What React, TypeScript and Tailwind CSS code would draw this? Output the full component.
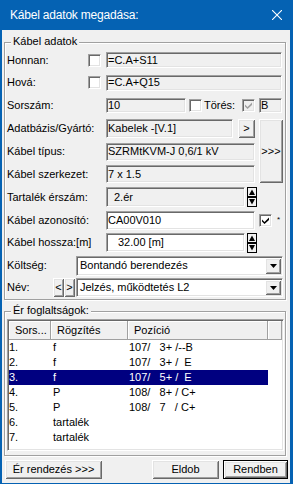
import React from "react";

const FONT = "font-['Liberation_Sans',Arial,sans-serif]";

// classic 3D edges
const sunken =
  "border border-t-[#a0a0a0] border-l-[#a0a0a0] border-r-white border-b-white shadow-[inset_1px_1px_0_#696969,inset_-1px_-1px_0_#e3e3e3]";
const raised =
  "bg-[#f0f0f0] shadow-[inset_1px_1px_0_#fff,inset_-1px_-1px_0_#696969,inset_2px_2px_0_#e3e3e3,inset_-2px_-2px_0_#a0a0a0]";

function Check({ checked = false, disabled = false }: { checked?: boolean; disabled?: boolean }) {
  return (
    <div className={`w-[13px] h-[13px] shrink-0 flex items-center justify-center ${sunken} ${disabled ? "bg-[#f0f0f0]" : "bg-white"}`}>
      {checked && (
        <svg width="7" height="7" viewBox="0 0 7 7">
          <polygon points="0,2.5 2.5,5 7,0.5 7,3 2.5,7 0,4.5" fill={disabled ? "#a0a0a0" : "#000"} />
        </svg>
      )}
    </div>
  );
}

function Spin() {
  return (
    <svg width="10" height="20" viewBox="0 0 10 20" className="shrink-0">
      <rect x="0.5" y="0.5" width="9" height="19" fill="#f0f0f0" stroke="#000" />
      <path d="M1 10h8" stroke="#000" strokeWidth="2" />
      <path d="M5 2.5L8 8H2Z" fill="#000" />
      <path d="M2 12H8L5 17.5Z" fill="#000" />
    </svg>
  );
}

function Combo({ text, className }: { text: string; className: string }) {
  return (
    <div className={`${sunken} bg-white p-[1px] flex items-center shrink-0 ${className}`}>
      <span className="flex-1 pl-[2px] whitespace-nowrap overflow-hidden">{text}</span>
      <div className={`${raised} w-[16px] h-full flex items-center justify-center`}>
        <svg width="7" height="4" viewBox="0 0 7 4">
          <path d="M0 0H7L3.5 4Z" fill="#000" />
        </svg>
      </div>
    </div>
  );
}

const rows = [
  ["1.", "f", "107/   3+ /--B"],
  ["2.", "f", "107/   3+ /  E"],
  ["3.", "f", "107/   5+ /  E"],
  ["4.", "P", "108/   8+ / C+"],
  ["5.", "P", "108/   7   / C+"],
  ["6.", "tartalék", ""],
  ["7.", "tartalék", ""],
];

export default function App() {
  return (
    <div className={`w-[293px] h-[484px] flex flex-col bg-[#0562b3] text-[11px] text-black leading-none ${FONT}`}>
      {/* Title bar */}
      <div className="h-[30px] shrink-0 flex items-center pl-[10px] pr-[11px] text-white text-[12px] tracking-[-0.2px]">
        <span className="flex-1">Kábel adatok megadása:</span>
        <svg width="10" height="10" viewBox="0 0 10 10">
          <path d="M0 0L10 10M10 0L0 10" stroke="#fff" strokeWidth="1.1" />
        </svg>
      </div>

      <div className="flex-1 ml-[2px] mr-[3px] mb-[1px] bg-[#f0f0f0] flex flex-col pt-[12px]">
        {/* Kábel adatok */}
        <div className="relative ml-[2px] w-[282px] h-[258px] shrink-0 border border-[#a0a0a0] shadow-[1px_1px_0_#fff,inset_1px_1px_0_#fff] pt-[6px] pl-[2px]">
          <span className="absolute left-[6px] top-[-8px] px-[2px] bg-[#f0f0f0] leading-[13px]">Kábel adatok</span>

          <div className="flex items-center h-[22px]">
            <span className="w-[81px]">Honnan:</span>
            <Check />
            <div className={`${sunken} ml-[5px] w-[176px] h-[16px] pl-[1px] flex items-center`}>=C.A+S11</div>
          </div>
          <div className="flex items-center h-[23px]">
            <span className="w-[81px]">Hová:</span>
            <Check />
            <div className={`${sunken} ml-[5px] w-[176px] h-[16px] pl-[1px] flex items-center`}>=C.A+Q15</div>
          </div>
          <div className="flex items-center h-[22px]">
            <span className="w-[99px]">Sorszám:</span>
            <div className={`${sunken} w-[80px] h-[15px] pl-[1px] flex items-center`}>10</div>
            <div className="ml-[3px]"><Check /></div>
            <span className="ml-[2px] w-[38px]">Törés:</span>
            <Check checked disabled />
            <div className={`${sunken} ml-[4px] w-[23px] h-[15px] pl-[1px] flex items-center`}>B</div>
          </div>

          <div className="flex">
            <div className="w-[248px] flex flex-col">
              <div className="flex items-center h-[24px]">
                <span className="w-[99px]">Adatbázis/Gyártó:</span>
                <div className={`${sunken} w-[127px] h-[19px] pl-[1px] flex items-center`}>Kabelek -[V.1]</div>
                <div className={`${raised} ml-[5px] w-[17px] h-[19px] flex items-center justify-center`}>&gt;</div>
              </div>
              <div className="flex items-center h-[23px]">
                <span className="w-[99px]">Kábel típus:</span>
                <div className={`${sunken} w-[149px] h-[18px] pl-[1px] flex items-center whitespace-nowrap`}>SZRMtKVM-J 0,6/1 kV</div>
              </div>
              <div className="flex items-center h-[22px]">
                <span className="w-[99px]">Kábel szerkezet:</span>
                <div className={`${sunken} w-[149px] h-[18px] pl-[1px] flex items-center`}>7 x 1.5</div>
              </div>
            </div>
            <div className={`${raised} ml-[4px] mt-[3px] w-[24px] h-[64px] flex items-center justify-center`}>&gt;&gt;&gt;</div>
          </div>

          <div className="flex items-center h-[24px]">
            <span className="w-[99px]">Tartalék érszám:</span>
            <div className={`${sunken} w-[139px] h-[20px] pl-[7px] flex items-center`}>2.ér</div>
            <div className="ml-[2px] flex"><Spin /></div>
          </div>
          <div className="flex items-center h-[22px]">
            <span className="w-[99px]">Kábel azonosító:</span>
            <div className={`${sunken} bg-white w-[149px] h-[19px] pl-[1px] flex items-center`}>CA00V010</div>
            <div className="ml-[4px]"><Check checked /></div>
            <span className="ml-[5px] text-[8px]">*</span>
          </div>
          <div className="flex items-center h-[23px]">
            <span className="w-[99px]">Kábel hossza:[m]</span>
            <div className={`${sunken} bg-white w-[139px] h-[19px] pl-[11px] flex items-center`}>32.00 [m]</div>
            <div className="ml-[2px] flex"><Spin /></div>
          </div>
          <div className="flex items-center h-[23px]">
            <span className="w-[69px]">Költség:</span>
            <Combo text="Bontandó berendezés" className="w-[207px] h-[20px]" />
          </div>
          <div className="flex items-center h-[21px]">
            <span className="w-[46px]">Név:</span>
            <div className={`${raised} w-[11px] h-[19px] flex items-center justify-center`}>&lt;</div>
            <div className={`${raised} w-[11px] h-[19px] flex items-center justify-center`}>&gt;</div>
            <Combo text="Jelzés, működtetés L2" className="ml-[1px] w-[207px] h-[19px]" />
          </div>
        </div>

        {/* Ér foglaltságok */}
        <div className="relative mt-[11px] ml-[2px] w-[282px] h-[145px] shrink-0 border border-[#a0a0a0] shadow-[1px_1px_0_#fff,inset_1px_1px_0_#fff] pt-[7px] pl-[2px]">
          <span className="absolute left-[6px] top-[-8px] px-[2px] bg-[#f0f0f0] leading-[13px]">Ér foglaltságok:</span>
          <div className={`${sunken} bg-white w-[277px] h-[132px] p-[1px] flex flex-col overflow-hidden`}>
            <div className="flex h-[19px] shrink-0">
              {[
                ["Sors...", "w-[42px]"],
                ["Rögzítés", "w-[77px]"],
                ["Pozíció", "w-[140px]"],
                ["", "flex-1"],
              ].map(([t, w], i) => (
                <div
                  key={i}
                  className={`${w} h-full bg-[#f0f0f0] border-r border-b border-[#a0a0a0] shadow-[inset_1px_1px_0_#fff] pl-[6px] flex items-center`}
                >
                  {t}
                </div>
              ))}
            </div>
            {rows.map((r, i) => (
              <div
                key={i}
                className={`flex w-[259px] h-[15px] shrink-0 items-center ${i === 2 ? "bg-[#000080] text-white" : ""}`}
              >
                <span className="w-[42px]">{r[0]}</span>
                <span className="w-[77px] pl-[2px]">{r[1]}</span>
                <span className="w-[140px] pl-[1px] whitespace-pre">{r[2]}</span>
              </div>
            ))}
          </div>
        </div>

        {/* Buttons */}
        <div className="flex mt-[4px] pl-[3px]">
          <div className={`${raised} w-[97px] h-[19px] flex items-center justify-center`}>Ér rendezés &gt;&gt;&gt;</div>
          <div className={`${raised} ml-[50px] w-[67px] h-[19px] flex items-center justify-center`}>Eldob</div>
          <div className="ml-[4px] w-[65px] h-[19px] border border-black">
            <div className={`${raised} w-full h-full flex items-center justify-center`}>Rendben</div>
          </div>
        </div>
      </div>
    </div>
  );
}
